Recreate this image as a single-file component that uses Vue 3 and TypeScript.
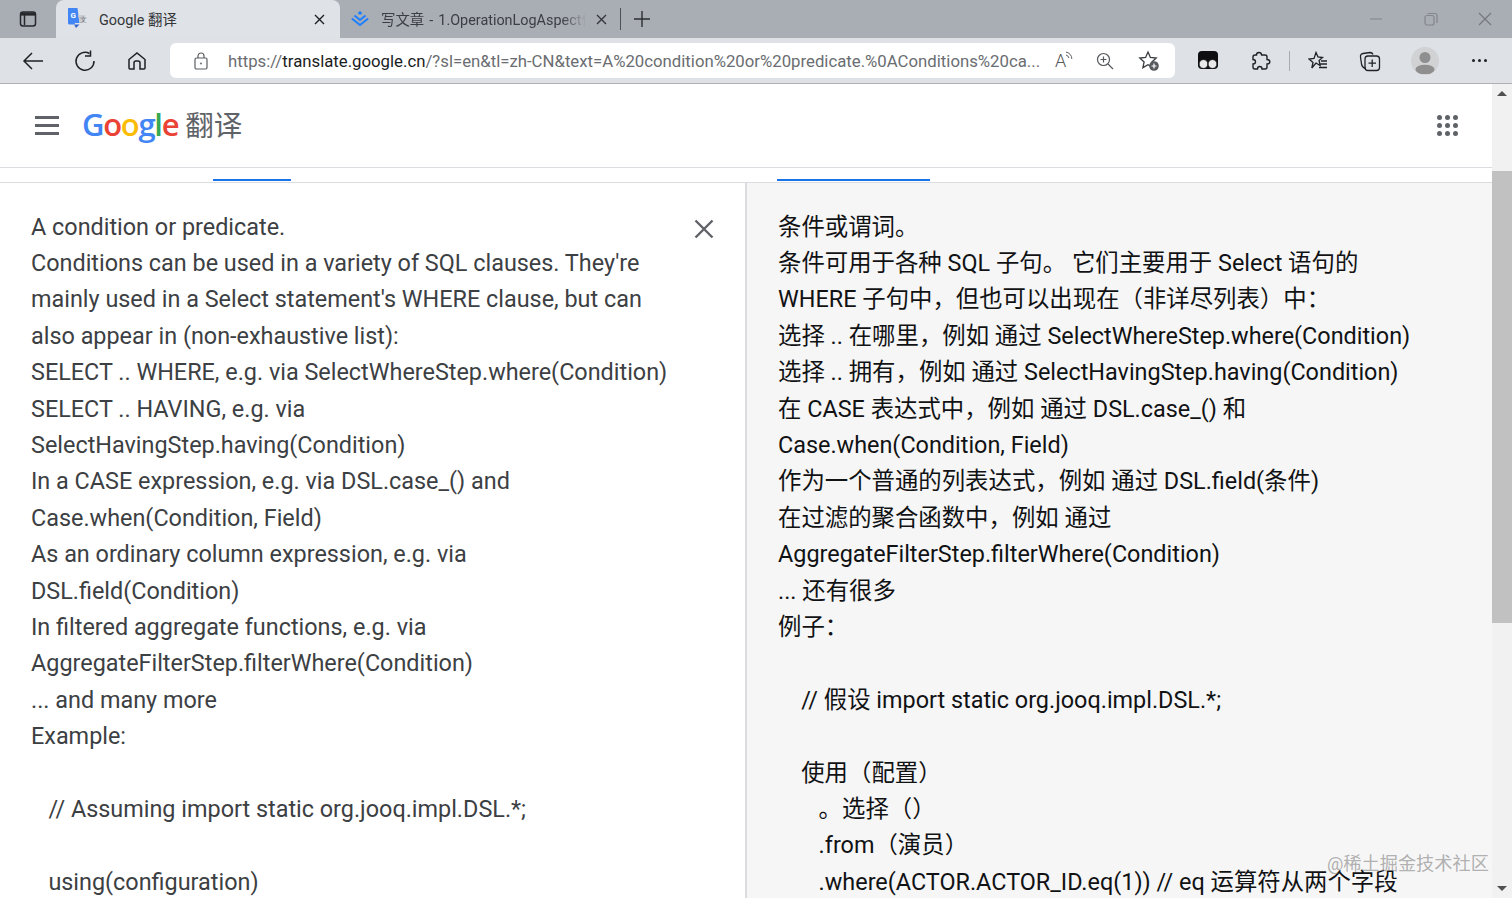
<script setup lang="ts">
const sourceLines: string[] = [
  'A condition or predicate.',
  'Conditions can be used in a variety of SQL clauses. They\'re',
  'mainly used in a Select statement\'s WHERE clause, but can',
  'also appear in (non-exhaustive list):',
  'SELECT .. WHERE, e.g. via SelectWhereStep.where(Condition)',
  'SELECT .. HAVING, e.g. via',
  'SelectHavingStep.having(Condition)',
  'In a CASE expression, e.g. via DSL.case_() and',
  'Case.when(Condition, Field)',
  'As an ordinary column expression, e.g. via',
  'DSL.field(Condition)',
  'In filtered aggregate functions, e.g. via',
  'AggregateFilterStep.filterWhere(Condition)',
  '... and many more',
  'Example:',
  ' ',
  '   // Assuming import static org.jooq.impl.DSL.*;',
  ' ',
  '   using(configuration)',
]
const targetLines: string[] = [
  '条件或谓词。',
  '条件可用于各种 SQL 子句。 它们主要用于 Select 语句的',
  'WHERE 子句中，但也可以出现在（非详尽列表）中：',
  '选择 .. 在哪里，例如 通过 SelectWhereStep.where(Condition)',
  '选择 .. 拥有，例如 通过 SelectHavingStep.having(Condition)',
  '在 CASE 表达式中，例如 通过 DSL.case_() 和',
  'Case.when(Condition, Field)',
  '作为一个普通的列表达式，例如 通过 DSL.field(条件)',
  '在过滤的聚合函数中，例如 通过',
  'AggregateFilterStep.filterWhere(Condition)',
  '... 还有很多',
  '例子：',
  ' ',
  '    // 假设 import static org.jooq.impl.DSL.*;',
  ' ',
  '    使用（配置）',
  '       。选择（）',
  '       .from（演员）',
  '       .where(ACTOR.ACTOR_ID.eq(1)) // eq 运算符从两个字段',
]
const logo = [
  { c: 'G', color: '#4285f4' },
  { c: 'o', color: '#ea4335' },
  { c: 'o', color: '#fbbc05' },
  { c: 'g', color: '#4285f4' },
  { c: 'l', color: '#34a853' },
  { c: 'e', color: '#ea4335' },
]
</script>

<template>
  <div class="window">
    <div class="tabstrip">
      <div class="tab-toggle">
        <svg width="18" height="18" viewBox="0 0 18 18" fill="none" stroke="#26282b" stroke-width="1.5">
          <rect x="1.5" y="2" width="15" height="14" rx="2.5" />
          <path d="M2 4.5h14M5.5 5v10" />
          <rect x="2" y="2.5" width="14" height="3" fill="#26282b" stroke="none" />
        </svg>
      </div>
      <div class="tab active">
        <svg class="favicon" width="20" height="22" viewBox="0 0 20 22">
          <path d="M1 1h9.5l2 15H8l-.6 1.5H2.5A1.5 1.5 0 0 1 1 16z" fill="#4285f4" />
          <path d="M7 17.5h5.500L9 21z" fill="#3367d6" />
          <path d="M11 8h7l-1 8h-4z" fill="#c9ccd0" />
          <text x="3.6" y="11" font-size="8" font-weight="700" fill="#fff" font-family="Roboto, sans-serif">G</text>
          <text x="13" y="15" font-size="6.5" fill="#6e7276" font-family="Roboto, sans-serif">文</text>
        </svg>
        <span class="tab-title">Google 翻译</span>
        <svg class="tab-x" width="11" height="11" viewBox="0 0 11 11" stroke="#1d1f22" stroke-width="1.4"><path d="M1 1l9 9M10 1l-9 9" /></svg>
      </div>
      <div class="tab inactive">
        <svg class="favicon-jj" width="18" height="16" viewBox="0 0 18 16" fill="none">
          <path d="M9 1l2.400 2L9 5 6.600 3z" fill="#1e80ff" />
          <path d="M3.500 5.500L9 10l5.500-4.500" stroke="#1e80ff" stroke-width="2" />
          <path d="M.8 8.500L9 15l8.200-6.500" stroke="#1e80ff" stroke-width="2" />
        </svg>
        <span class="tab-title fade">写文章 - 1.OperationLogAspect什</span>
        <svg class="tab-x" width="11" height="11" viewBox="0 0 11 11" stroke="#33363a" stroke-width="1.4"><path d="M1 1l9 9M10 1l-9 9" /></svg>
      </div>
      <span class="tab-sep"></span>
      <svg class="new-tab" width="18" height="18" viewBox="0 0 18 18" stroke="#2c2e31" stroke-width="1.4"><path d="M9 1v16M1 9h16" /></svg>
      <div class="win-controls">
        <svg width="14" height="14" viewBox="0 0 14 14" stroke="#8a8d92" stroke-width="1.3"><path d="M1 7h12" /></svg>
        <svg width="14" height="14" viewBox="0 0 14 14" fill="none" stroke="#84878c" stroke-width="1.2"><rect x="1" y="3.500" width="9" height="9.500" rx="2" /><path d="M3.500 1.500h7.500a2 2 0 0 1 2 2V11" /></svg>
        <svg width="14" height="14" viewBox="0 0 14 14" stroke="#75787d" stroke-width="1.200"><path d="M1 1l12 12M13 1L1 13" /></svg>
      </div>
    </div>

    <div class="toolbar">
      <svg class="nav back" width="22" height="20" viewBox="0 0 22 20" fill="none" stroke="#1f2123" stroke-width="1.500"><path d="M21 10H2M10 2l-8 8 8 8" /></svg>
      <svg class="nav reload" width="22" height="22" viewBox="0 0 22 22" fill="none" stroke="#1f2123" stroke-width="1.500"><path d="M15.500 3.500A9 9 0 1 0 20 11" /><path d="M16.500 1v5.500H11" transform="translate(0 -.5)" /></svg>
      <svg class="nav home" width="20" height="20" viewBox="0 0 20 20" fill="none" stroke="#1f2123" stroke-width="1.500"><path d="M2 8.500L10 2l8 6.500V17a1 1 0 0 1-1 1h-4v-6a2 2 0 0 0-2-2H9a2 2 0 0 0-2 2v6H3a1 1 0 0 1-1-1z" /></svg>
      <div class="omnibox">
        <svg class="lock" width="16" height="18" viewBox="0 0 16 18" fill="none" stroke="#5b5e62" stroke-width="1.200"><rect x="2" y="6" width="12" height="11" rx="1.500" /><path d="M5 6V4a3 3 0 0 1 6 0v2" /><circle cx="8" cy="11.500" r=".9" fill="#5b5e62" stroke="none" /></svg>
        <span class="url"><span class="dim">https://</span>translate.google.cn<span class="dim">/?sl=en&amp;tl=zh-CN&amp;text=A%20condition%20or%20predicate.%0AConditions%20ca...</span></span>
        <span class="read-aloud">A<svg width="10" height="12" viewBox="0 0 10 12" fill="none" stroke="#55585c" stroke-width="1"><path d="M1 5a4 4 0 0 1 3 3M1 2a7 7 0 0 1 6 7" /></svg></span>
        <svg class="zoom-i" width="18" height="18" viewBox="0 0 18 18" fill="none" stroke="#55585c" stroke-width="1.200"><circle cx="7.500" cy="7.500" r="6" /><path d="M12 12l5 5M7.500 4.500v6M4.500 7.500h6" /></svg>
        <svg class="fav-add" width="22" height="22" viewBox="0 0 22 22" fill="none"><path d="M10 2l2.400 5.400 5.800.6-4.300 3.900 1.200 5.700-5.100-2.900-5.100 2.900 1.200-5.700L1.800 8l5.800-.6z" stroke="#3a3c3f" stroke-width="1.300" /><circle cx="16" cy="16" r="4.800" fill="#55585c" /><path d="M16 13.500v5M13.500 16h5" stroke="#fff" stroke-width="1.200" /></svg>
      </div>
      <div class="tools">
        <svg class="t1" width="20" height="20" viewBox="0 0 20 20"><rect x="0" y="0" width="20" height="18" rx="4" fill="#0e0e10" /><circle cx="5.500" cy="13" r="4.500" fill="#e9e9ea" stroke="#0e0e10" /><circle cx="14.500" cy="13" r="4.500" fill="#e9e9ea" stroke="#0e0e10" /></svg>
        <svg class="t2" width="20" height="20" viewBox="0 0 20 20" fill="none" stroke="#202225" stroke-width="1.400"><path d="M8 1.500c1.800 0 2.500 1.300 2.600 2.500H14a2 2 0 0 1 2 2v2.500c1.800 0 2.800 1 2.800 2.200S17.800 13 16 13v3a2 2 0 0 1-2 2h-3c0-1.500-1-2.500-2.300-2.500S6.500 16.500 6.500 18H4a2 2 0 0 1-2-2v-3c1.500 0 2.500-1 2.500-2.300S3.500 8.500 2 8.500V6a2 2 0 0 1 2-2h1.500C5.500 2.800 6.300 1.500 8 1.500z" /></svg>
        <span class="tool-sep"></span>
        <svg class="t3" width="20" height="20" viewBox="0 0 20 20" fill="none" stroke="#202225" stroke-width="1.300"><path d="M8 1.500l2 4.500 4.500.5-3.400 3 1 5-4.100-2.500L3.800 17 5 11.500 1 8l5-.6zM13 10h6M12.500 13h6.500M11 16.500h8" /></svg>
        <svg class="t4" width="22" height="22" viewBox="0 0 22 22" fill="none" stroke="#202225" stroke-width="1.300"><path d="M7 18.500C4.500 18 3 16.500 2.500 14L1.500 7a3 3 0 0 1 2.500-3.500L11 2.500c1.500 0 2.500.7 3 2" /><rect x="6" y="6" width="14.500" height="14.500" rx="3" /><path d="M13.200 9.500v7.500M9.500 13.200h7.500" /></svg>
        <div class="avatar">
          <svg width="26" height="26" viewBox="0 0 26 26"><circle cx="13" cy="9.500" r="5.500" fill="#8f8f8f" /><ellipse cx="13" cy="21.500" rx="9.500" ry="4.800" fill="#8f8f8f" /></svg>
        </div>
        <span class="more"><i></i><i></i><i></i></span>
      </div>
    </div>

    <div class="page">
      <div class="main">
        <header class="gb">
          <div class="burger"><i></i><i></i><i></i></div>
          <div class="brand">
            <span class="google"><span v-for="(l, i) in logo" :key="i" :style="{ color: l.color }">{{ l.c }}</span></span>
            <span class="product">翻译</span>
          </div>
          <div class="apps"><i v-for="n in 9" :key="n"></i></div>
        </header>
        <div class="tabs-strip">
          <span class="ink left-ink"></span>
          <span class="ink right-ink"></span>
        </div>
        <div class="panes">
          <section class="pane source">
            <div class="lines src-lines">
              <div v-for="(line, i) in sourceLines" :key="i" class="line">{{ line }}</div>
            </div>
            <svg class="clear" width="20" height="20" viewBox="0 0 20 20" stroke="#5f6368" stroke-width="2.400"><path d="M1.500 1.500l17 17M18.500 1.500l-17 17" /></svg>
          </section>
          <section class="pane target">
            <div class="lines tgt-lines">
              <div v-for="(line, i) in targetLines" :key="i" class="line">{{ line }}</div>
            </div>
            <span class="watermark">@稀土掘金技术社区</span>
          </section>
        </div>
      </div>
      <aside class="scrollbar">
        <span class="arrow up"></span>
        <span class="thumb"></span>
        <span class="arrow down"></span>
      </aside>
    </div>
  </div>
</template>

<style scoped>
.window { width: 1512px; height: 898px; display: flex; flex-direction: column; overflow: hidden; font-family: Roboto, "Noto Sans CJK SC", sans-serif; background: #fff; }
.tabstrip { height: 38px; flex: none; background: #a9adb4; display: flex; align-items: center; box-sizing: border-box; }
.tab-toggle { width: 56px; display: flex; justify-content: center; }
.tab { height: 38px; display: flex; align-items: center; box-sizing: border-box; position: relative; padding-bottom: 2px; }
.tab.active { width: 284px; background: #dfe2e6; border-radius: 8px 8px 0 0; padding-left: 11px; }
.tab.inactive { width: 280px; padding-left: 11px; }
.tab-title { font-size: 14.400px; color: #33363a; white-space: nowrap; }
.tab.active .tab-title { margin-left: 12px; }
.tab.inactive .tab-title { margin-left: 12px; color: #3b3e42; width: 205px; overflow: hidden; word-spacing: 1.500px; -webkit-mask-image: linear-gradient(90deg, #000 88%, transparent); mask-image: linear-gradient(90deg, #000 88%, transparent); }
.tab-x { position: absolute; right: 15px; top: 14px; }
.tab.inactive .tab-x { right: 13px; }
.tab-sep { width: 1px; height: 22px; background: #4d5054; margin-left: 0; }
.new-tab { margin-left: 12px; }
.win-controls { margin-left: auto; width: 143px; padding-right: 20px; box-sizing: border-box; display: flex; justify-content: space-between; }
.toolbar { height: 46px; flex: none; box-sizing: border-box; background: #dee1e6; border-bottom: 1px solid #aeb0b3; display: flex; align-items: center; padding-left: 22px; }
.nav { flex: none; }
.reload { margin-left: 30px; }
.home { margin-left: 31px; }
.omnibox { margin-left: 23px; width: 1005px; height: 35px; background: #fff; border-radius: 6px; display: flex; align-items: center; padding-left: 23px; box-sizing: border-box; flex: none; }
.url { font-size: 16.750px; color: #1a1c1e; margin-left: 19px; white-space: nowrap; width: 812px; overflow: hidden; }
.dim { color: #6a6d71; }
.read-aloud { font-size: 18px; color: #55585c; width: 20px; margin-left: 15px; display: flex; font-family: Roboto, sans-serif; font-weight: 300; align-items: flex-start; }
.read-aloud svg { margin-left: -1px; }
.zoom-i { margin-left: 21px; }
.fav-add { margin-left: 24px; }
.tools { display: flex; align-items: center; margin-left: 23px; flex: 1; position: relative; }
.t2 { margin-left: 33px; }
.tool-sep { width: 1px; height: 20px; background: #a9acaf; margin-left: 18px; }
.t3 { margin-left: 18px; }
.t4 { margin-left: 31px; }
.avatar { width: 28px; height: 28px; border-radius: 50%; background: #d0d2d4; margin-left: 30px; overflow: hidden; display: flex; justify-content: center; align-items: center; }
.more { display: flex; gap: 3px; margin-left: 33px; }
.more i { width: 3px; height: 3px; border-radius: 50%; background: #1f2123; display: block; }
.page { flex: 1; min-height: 0; display: flex; }
.main { flex: 1; min-width: 0; display: flex; flex-direction: column; }
.gb { height: 83px; flex: none; display: flex; align-items: center; padding: 0 34px 0 35px; box-sizing: border-box; }
.burger { width: 24px; display: flex; flex-direction: column; gap: 5px; }
.burger i { height: 3px; background: #5f6368; display: block; }
.brand { display: flex; align-items: center; margin-left: 23px; margin-top: -3px; }
.google { font-family: "Open Sans", sans-serif; font-size: 31px; font-weight: 600; letter-spacing: -1.300px; line-height: 40px; }
.product { font-size: 28.500px; color: #5f6368; margin-left: 7px; line-height: 40px; font-family: "Noto Sans CJK SC", sans-serif; font-weight: 400; }
.apps { margin-left: auto; display: grid; grid-template-columns: repeat(3, 5px); gap: 3px; }
.apps i { width: 5px; height: 5px; border-radius: 50%; background: #5f6368; display: block; }
.tabs-strip { height: 16px; flex: none; box-sizing: border-box; border-top: 1px solid #dadce0; border-bottom: 1px solid #dadce0; position: relative; }
.ink { position: absolute; bottom: 1px; height: 2px; background: #1a73e8; }
.left-ink { left: 213px; width: 78px; }
.right-ink { left: 777px; width: 153px; }
.panes { flex: 1; min-height: 0; display: flex; overflow: hidden; }
.pane { box-sizing: border-box; position: relative; overflow: hidden; }
.source { width: 745px; background: #fff; padding: 25.500px 0 0 31px; flex: none; }
.target { flex: 1; background: #f6f6f6; border-left: 2px solid #dadce0; padding: 25.500px 0 0 31px; }
.lines { font-size: 23.400px; line-height: 36.400px; white-space: pre; }
.src-lines { color: #3c4043; }
.tgt-lines { color: #111214; }
.clear { position: absolute; left: 694px; top: 36px; }
.watermark { position: absolute; left: 580px; top: 666px; font-size: 18.200px; color: rgba(130, 130, 130, .62); white-space: nowrap; }
.scrollbar { width: 20px; flex: none; background: #f1f1f1; position: relative; display: flex; flex-direction: column; align-items: center; padding-top: 87px; box-sizing: border-box; }
.thumb { width: 20px; height: 452px; background: #c1c1c1; display: block; }
.arrow { position: absolute; width: 0; height: 0; border-left: 5px solid transparent; border-right: 5px solid transparent; }
.arrow.up { top: 7px; border-bottom: 5px solid #505050; }
.arrow.down { bottom: 7px; border-top: 5px solid #505050; }
</style>
